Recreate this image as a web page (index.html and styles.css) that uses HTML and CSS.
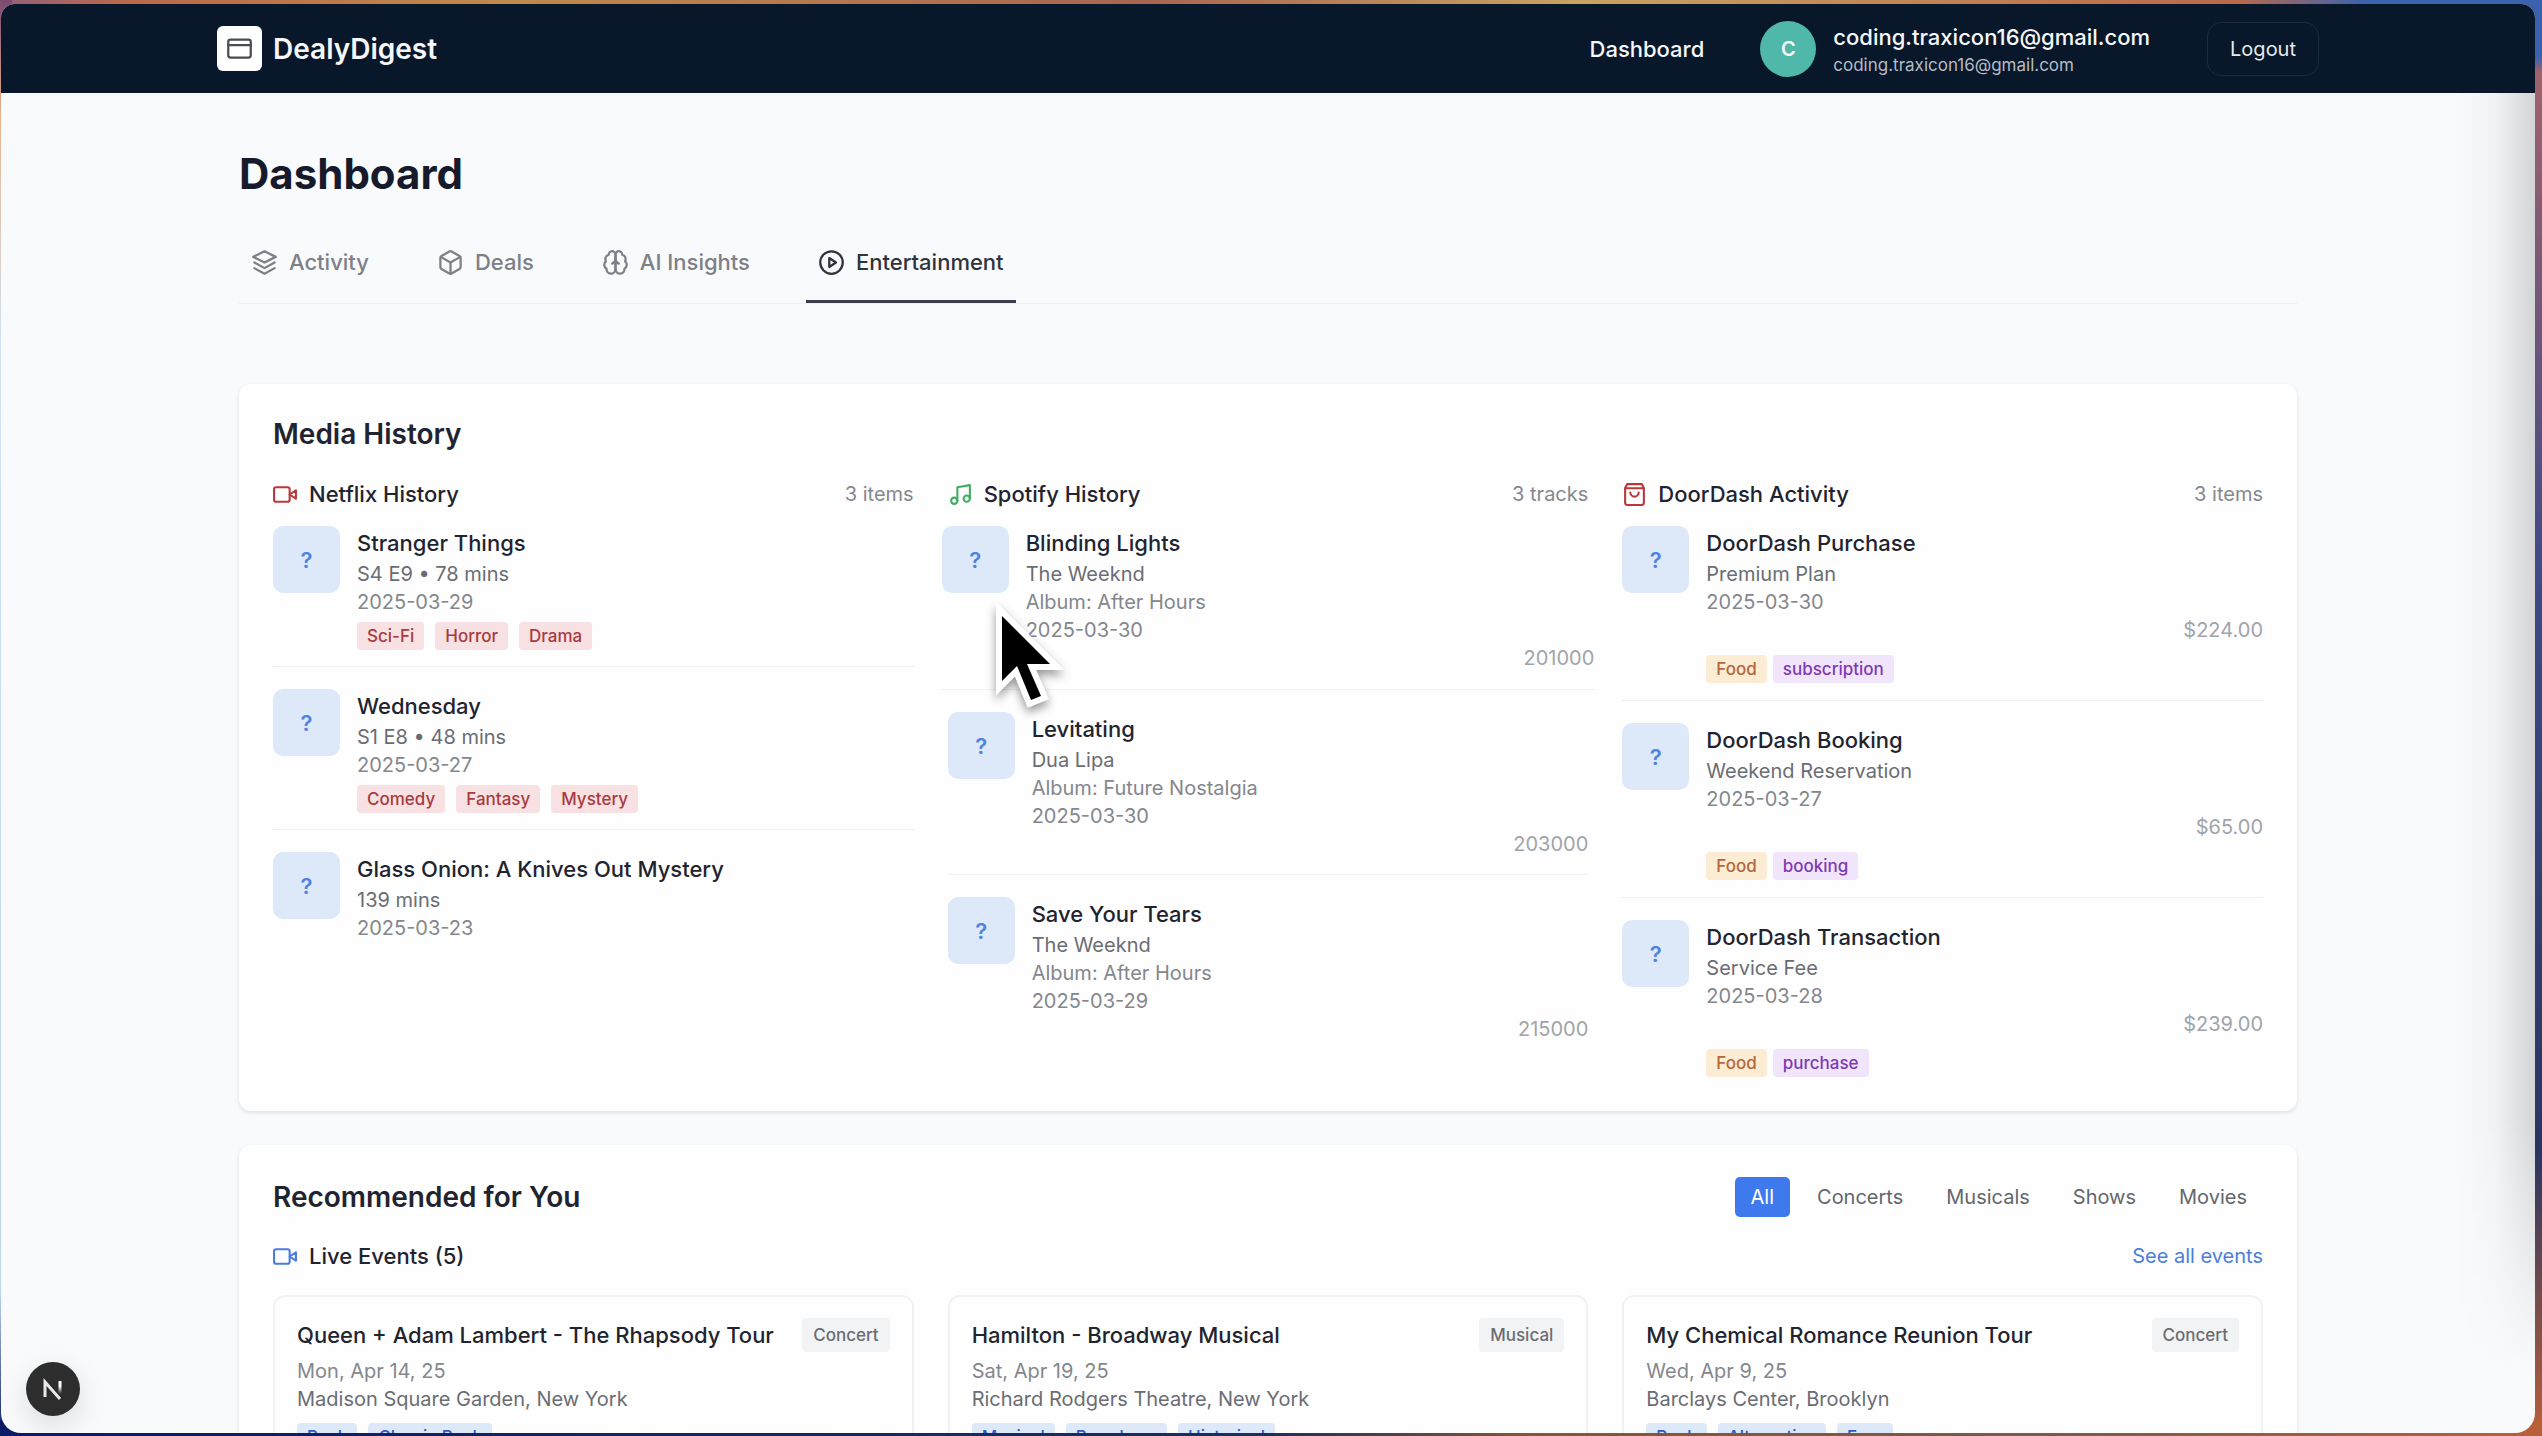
FILE: index.html
```html
<!DOCTYPE html>
<html lang="en">
<head>
  <meta charset="UTF-8">
  <meta name="viewport" content="width=device-width, initial-scale=1.0">
  <title>DealyDigest</title>
  <link rel="stylesheet" href="styles.css">
</head>
<body>
  <!-- shared icons -->
  <svg class="sprite" aria-hidden="true">
    <symbol id="icon-video" viewBox="0 0 24 24">
      <rect x="1" y="5" width="15" height="14" rx="2" />
      <path d="M22 8l-6 4 6 4V8z" />
    </symbol>
  </svg>

  <div class="window">
    <header class="topbar">
      <div class="topbar-inner">
        <a class="brand" href="#">
          <span class="brand-logo">
            <svg class="icon" viewBox="0 0 24 24"><rect x="2" y="4" width="20" height="16" rx="2" /><path d="M2 9h20" /></svg>
          </span>
          DealyDigest
        </a>
        <nav class="topbar-nav">
          <a class="nav-link" href="#">Dashboard</a>
          <div class="user">
            <span class="avatar">C</span>
            <div class="user-text">
              <div class="user-name">coding.traxicon16@gmail.com</div>
              <div class="user-email">coding.traxicon16@gmail.com</div>
            </div>
          </div>
          <button class="logout" type="button">Logout</button>
        </nav>
      </div>
    </header>

    <main class="page">
      <h1>Dashboard</h1>

      <div class="tabs" role="tablist">
        <button class="tab" type="button" role="tab">
          <svg class="icon" viewBox="0 0 24 24"><path d="M12 2L2 7l10 5 10-5-10-5z" /><path d="M3 12l9 5 9-5" /><path d="M3 17l9 5 9-5" /></svg>
          Activity
        </button>
        <button class="tab" type="button" role="tab">
          <svg class="icon" viewBox="0 0 24 24"><path d="M21 16V8a2 2 0 0 0-1-1.730l-7-4a2 2 0 0 0-2 0l-7 4A2 2 0 0 0 3 8v8a2 2 0 0 0 1 1.730l7 4a2 2 0 0 0 2 0l7-4A2 2 0 0 0 21 16z" /><path d="M3.300 7L12 12l8.700-5" /><path d="M12 22V12" /></svg>
          Deals
        </button>
        <button class="tab" type="button" role="tab">
          <svg class="icon" viewBox="0 0 24 24"><path d="M12 5a3 3 0 1 0-5.997.125 4 4 0 0 0-2.526 5.770 4 4 0 0 0 .556 6.588A4 4 0 1 0 12 18z" /><path d="M12 5a3 3 0 1 1 5.997.125 4 4 0 0 1 2.526 5.770 4 4 0 0 1-.556 6.588A4 4 0 1 1 12 18z" /><path d="M15 13a4.500 4.500 0 0 1-3-4 4.500 4.500 0 0 1-3 4" /></svg>
          AI Insights
        </button>
        <button class="tab active" type="button" role="tab" aria-selected="true">
          <svg class="icon" viewBox="0 0 24 24"><circle cx="12" cy="12" r="10" /><path d="M10 8l6 4-6 4V8z" /></svg>
          Entertainment
        </button>
      </div>

      <section class="card">
        <h2>Media History</h2>
        <div class="columns">
          <div class="column">
            <div class="column-head">
              <svg class="icon red"><use href="#icon-video" /></svg>
              <h3>Netflix History</h3>
              <span class="count">3 items</span>
            </div>
            <div class="item">
              <div class="thumb">?</div>
              <div class="info">
                <h4>Stranger Things</h4>
                <p class="sub">S4 E9 • 78 mins</p>
                <p class="date">2025-03-29</p>
                <div class="tags"><span class="tag genre">Sci-Fi</span><span class="tag genre">Horror</span><span class="tag genre">Drama</span></div>
              </div>
            </div>
            <div class="item">
              <div class="thumb">?</div>
              <div class="info">
                <h4>Wednesday</h4>
                <p class="sub">S1 E8 • 48 mins</p>
                <p class="date">2025-03-27</p>
                <div class="tags"><span class="tag genre">Comedy</span><span class="tag genre">Fantasy</span><span class="tag genre">Mystery</span></div>
              </div>
            </div>
            <div class="item">
              <div class="thumb">?</div>
              <div class="info">
                <h4>Glass Onion: A Knives Out Mystery</h4>
                <p class="sub">139 mins</p>
                <p class="date">2025-03-23</p>
              </div>
            </div>
          </div>

          <div class="column">
            <div class="column-head">
              <svg class="icon green" viewBox="0 0 24 24"><path d="M9 18V5l12-2v13" /><circle cx="6" cy="18" r="3" /><circle cx="18" cy="16" r="3" /></svg>
              <h3>Spotify History</h3>
              <span class="count">3 tracks</span>
            </div>
            <div class="item hovered">
              <div class="thumb">?</div>
              <div class="info">
                <h4>Blinding Lights</h4>
                <p class="sub">The Weeknd</p>
                <p class="date">Album: After Hours</p>
                <p class="date">2025-03-30</p>
                <p class="amount">201000</p>
              </div>
              <svg class="cursor" viewBox="0 0 72 110"><path d="M11 16V81L26 66L40 100L50 96L36 64H59Z" /></svg>
            </div>
            <div class="item">
              <div class="thumb">?</div>
              <div class="info">
                <h4>Levitating</h4>
                <p class="sub">Dua Lipa</p>
                <p class="date">Album: Future Nostalgia</p>
                <p class="date">2025-03-30</p>
                <p class="amount">203000</p>
              </div>
            </div>
            <div class="item">
              <div class="thumb">?</div>
              <div class="info">
                <h4>Save Your Tears</h4>
                <p class="sub">The Weeknd</p>
                <p class="date">Album: After Hours</p>
                <p class="date">2025-03-29</p>
                <p class="amount">215000</p>
              </div>
            </div>
          </div>

          <div class="column">
            <div class="column-head">
              <svg class="icon red" viewBox="0 0 24 24"><path d="M5 2L3 6v14a2 2 0 0 0 2 2h14a2 2 0 0 0 2-2V6l-2-4z" /><path d="M3 6h18" /><path d="M16 10a4 4 0 0 1-8 0" /></svg>
              <h3>DoorDash Activity</h3>
              <span class="count">3 items</span>
            </div>
            <div class="item">
              <div class="thumb">?</div>
              <div class="info">
                <h4>DoorDash Purchase</h4>
                <p class="sub">Premium Plan</p>
                <p class="date">2025-03-30</p>
                <p class="amount">$224.00</p>
                <div class="tags order"><span class="tag food">Food</span><span class="tag kind">subscription</span></div>
              </div>
            </div>
            <div class="item">
              <div class="thumb">?</div>
              <div class="info">
                <h4>DoorDash Booking</h4>
                <p class="sub">Weekend Reservation</p>
                <p class="date">2025-03-27</p>
                <p class="amount">$65.00</p>
                <div class="tags order"><span class="tag food">Food</span><span class="tag kind">booking</span></div>
              </div>
            </div>
            <div class="item">
              <div class="thumb">?</div>
              <div class="info">
                <h4>DoorDash Transaction</h4>
                <p class="sub">Service Fee</p>
                <p class="date">2025-03-28</p>
                <p class="amount">$239.00</p>
                <div class="tags order"><span class="tag food">Food</span><span class="tag kind">purchase</span></div>
              </div>
            </div>
          </div>
        </div>
      </section>

      <section class="card">
        <div class="card-head">
          <h2>Recommended for You</h2>
          <div class="filters">
            <button class="filter selected" type="button">All</button>
            <button class="filter" type="button">Concerts</button>
            <button class="filter" type="button">Musicals</button>
            <button class="filter" type="button">Shows</button>
            <button class="filter" type="button">Movies</button>
          </div>
        </div>
        <div class="column-head events-head">
          <svg class="icon blue"><use href="#icon-video" /></svg>
          <h3>Live Events (5)</h3>
          <a class="see-all" href="#">See all events</a>
        </div>
        <div class="columns">
          <article class="event">
            <div class="event-head"><h4>Queen + Adam Lambert - The Rhapsody Tour</h4><span class="badge">Concert</span></div>
            <p class="date">Mon, Apr 14, 25</p>
            <p class="sub">Madison Square Garden, New York</p>
            <div class="tags"><span class="tag topic">Rock</span><span class="tag topic">Classic Rock</span></div>
          </article>
          <article class="event">
            <div class="event-head"><h4>Hamilton - Broadway Musical</h4><span class="badge">Musical</span></div>
            <p class="date">Sat, Apr 19, 25</p>
            <p class="sub">Richard Rodgers Theatre, New York</p>
            <div class="tags"><span class="tag topic">Musical</span><span class="tag topic">Broadway</span><span class="tag topic">Historical</span></div>
          </article>
          <article class="event">
            <div class="event-head"><h4>My Chemical Romance Reunion Tour</h4><span class="badge">Concert</span></div>
            <p class="date">Wed, Apr 9, 25</p>
            <p class="sub">Barclays Center, Brooklyn</p>
            <div class="tags"><span class="tag topic">Rock</span><span class="tag topic">Alternative</span><span class="tag topic">Emo</span></div>
          </article>
        </div>
      </section>
    </main>

    <button class="dev-badge" type="button" aria-label="Next.js dev tools">
      <svg viewBox="0 0 40 40">
        <defs>
          <linearGradient id="fade" gradientUnits="userSpaceOnUse" x1="0" y1="12" x2="0" y2="25"><stop offset="0.400" stop-color="#fff" /><stop offset="1" stop-color="#fff" stop-opacity="0" /></linearGradient>
        </defs>
        <path d="M12 28V13L27 30" stroke="#e8e8e8" />
        <path d="M27 12v13" stroke="url(#fade)" />
      </svg>
    </button>
  </div>
</body>
</html>
```
FILE: styles.css
```css
* {
  box-sizing: border-box;
}

body {
  margin: 0;
  padding: 4px 7px 3px 1px;
  height: 100vh;
  overflow: hidden;
  font-family: Inter, "Liberation Sans", sans-serif;
  font-size: 20px;
  line-height: 28px;
  color: #1f2430;
  /* desktop wallpaper: bottom, right and left edges over the top one */
  background:
    linear-gradient(to right, #0a1a66, #1c2f5c 50%, #8a5436 60%, #7a5a48 80%, #b9603a) bottom / 100% 16px no-repeat,
    linear-gradient(#3d62ad 4%, #a0626c 5%, #3f4a86 40%, #2a3560 80%, #b9603a) right / 24px 100% no-repeat,
    linear-gradient(#7d4a70, #e8b48c 8%, #cfe4f5 25%, #b8d8f0 90%, #0a1a66) left / 12px 100% no-repeat,
    linear-gradient(to right, #95607a, #b9694a 5%, #c08a4c 20%, #a86552 45%, #c9a262 62%, #b9694a 88%, #3d62ad 93%);
}

h1, h2, h3, h4, p {
  margin: 0;
}

button {
  font-family: inherit;
  cursor: pointer;
}

.sprite {
  display: none;
}

.icon {
  width: 27px;
  height: 27px;
  flex-shrink: 0;
  fill: none;
  stroke: currentColor;
  stroke-width: 2;
  stroke-linecap: round;
  stroke-linejoin: round;
}

.window {
  position: relative;
  height: 100%;
  overflow: hidden;
  border-radius: 14px 14px 20px 20px;
  background: #f9fafc;
}

/* soft shade down the right side of the window */
.window::after {
  content: "";
  position: absolute;
  top: 88px;
  right: 0;
  width: 80px;
  height: 1280px;
  pointer-events: none;
  background: linear-gradient(to right, rgba(0, 0, 0, 0), rgba(0, 0, 0, 0.03) 50%, rgba(0, 0, 0, 0.15));
  -webkit-mask-image: linear-gradient(#000 80%, transparent);
  mask-image: linear-gradient(#000 80%, transparent);
}

/* top bar */
.topbar {
  background: #08172a;
  color: #f5f7fa;
}

.topbar-inner {
  display: flex;
  align-items: center;
  justify-content: space-between;
  max-width: 2102px;
  height: 89px;
  margin: 0 auto;
}

.brand {
  display: flex;
  align-items: center;
  gap: 11px;
  color: inherit;
  font-size: 28px;
  font-weight: 600;
  text-decoration: none;
}

.brand-logo {
  display: flex;
  align-items: center;
  justify-content: center;
  width: 45px;
  height: 45px;
  border-radius: 6px;
  background: #fff;
  color: #4a4d52;
}

.topbar-nav,
.user {
  display: flex;
  align-items: center;
}

.nav-link {
  margin-right: 56px;
  color: inherit;
  font-size: 22px;
  font-weight: 500;
  text-decoration: none;
}

.user {
  gap: 17px;
  margin-right: 57px;
}

.avatar {
  display: flex;
  align-items: center;
  justify-content: center;
  width: 56px;
  height: 56px;
  border-radius: 50%;
  background: #50b8a8;
  font-weight: 600;
}

.user-text {
  padding-top: 4px;
}

.user-name {
  font-size: 22px;
  font-weight: 500;
}

.user-email {
  font-size: 17px;
  color: #b6bcc5;
}

.logout {
  height: 54px;
  padding: 0 22px;
  border: 1px solid #1c2a3c;
  border-radius: 14px;
  background: transparent;
  color: #e6e9ed;
  font-size: 20px;
}

/* page */
.page {
  max-width: 2058px;
  margin: 0 auto;
  padding-top: 55px;
}

h1 {
  font-size: 42px;
  line-height: 52px;
  color: #171a2b;
}

.tabs {
  display: flex;
  gap: 44px;
  margin-top: 27px;
  border-bottom: 1px solid #eceef1;
}

.tab {
  display: flex;
  align-items: center;
  gap: 11px;
  height: 76px;
  padding: 0 12px 3px;
  border: 0;
  border-bottom: 3px solid transparent;
  background: none;
  color: #7d8086;
  font-size: 22px;
  font-weight: 500;
}

.tab.active {
  border-bottom-color: #3b3e48;
  color: #30333d;
}

.card {
  margin-top: 34px;
  padding: 32px 34px 33px;
  border-radius: 12px;
  background: #fefefe;
  box-shadow: 0 2px 4px rgba(0, 0, 0, 0.1);
}

.tabs + .card {
  margin-top: 80px;
}

h2 {
  font-size: 28px;
  line-height: 36px;
  font-weight: 600;
}

h3,
h4 {
  font-size: 22px;
  line-height: 34px;
  font-weight: 500;
}

.columns {
  display: grid;
  grid-template-columns: repeat(3, 1fr);
  gap: 34px;
}

.column-head {
  display: flex;
  align-items: center;
  gap: 11px;
  margin: 25px 0 15px;
}

.events-head {
  margin: 22px 0;
}

.column-head .icon {
  width: 25px;
  height: 25px;
}

.red {
  color: #b8393b;
}

.green {
  color: #3fae62;
}

.blue {
  color: #4a7be0;
}

.count,
.see-all {
  margin-left: auto;
}

.count {
  color: #85888e;
}

.see-all {
  color: #4a80d8;
  text-decoration: none;
}

.item {
  position: relative;
  display: flex;
  gap: 17px;
  padding-bottom: 16px;
  margin-bottom: 22px;
  border-bottom: 1px solid #eeeff1;
}

.item:last-child {
  margin-bottom: 0;
  padding-bottom: 0;
  border-bottom: 0;
}

.item.hovered {
  margin-left: -6px;
  margin-right: -6px;
  padding-bottom: 17px;
}

.thumb {
  display: flex;
  align-items: center;
  justify-content: center;
  width: 67px;
  height: 67px;
  flex-shrink: 0;
  border-radius: 10px;
  background: #dde9f9;
  color: #4f83e2;
  font-size: 22px;
  font-weight: 600;
}

.info {
  flex: 1;
  min-width: 0;
}

.sub {
  color: #6a6d73;
}

.date {
  color: #84878d;
}

.amount {
  color: #a1a4aa;
  text-align: right;
}

.tags {
  display: flex;
  gap: 11px;
  margin-top: 6px;
}

.tags.order {
  gap: 6px;
  margin-top: 11px;
  padding-bottom: 1px;
}

.tag {
  padding: 0 10px;
  border-radius: 4px;
  font-size: 17px;
  font-weight: 500;
}

.genre {
  background: #f8e1e2;
  color: #a83a40;
}

.food {
  background: #fcecd3;
  color: #b2683c;
}

.kind {
  background: #f1e5fc;
  color: #8038b4;
}

.topic {
  background: #dde9f9;
  color: #3058c4;
}

.cursor {
  position: absolute;
  top: 74px;
  left: 49px;
  width: 72px;
  height: 110px;
  overflow: visible;
  fill: #000;
  stroke: #fff;
  stroke-width: 12;
  paint-order: stroke;
  filter: drop-shadow(0 5px 5px rgba(0, 0, 0, 0.4));
}

/* recommendations */
.card-head {
  display: flex;
  align-items: center;
  justify-content: space-between;
}

.filters {
  display: flex;
  gap: 11px;
}

.filter {
  height: 40px;
  padding: 0 16px;
  border: 0;
  border-radius: 5px;
  background: none;
  color: #63666d;
  font-size: 20px;
}

.filter.selected {
  background: #3f79ee;
  color: #fff;
}

.event {
  padding: 21px 22px;
  border: 2px solid #f1f2f4;
  border-radius: 12px;
}

.event-head {
  display: flex;
  align-items: center;
  justify-content: space-between;
}

.event-head + .date {
  margin-top: 5px;
}

.event .tags {
  margin-top: 10px;
}

.badge {
  padding: 3px 11px;
  border-radius: 4px;
  background: #f2f3f5;
  color: #6a6d73;
  font-size: 17px;
  font-weight: 500;
}

/* dev tools button */
.dev-badge {
  position: absolute;
  left: 25px;
  bottom: 17px;
  display: flex;
  align-items: center;
  justify-content: center;
  width: 54px;
  height: 54px;
  padding: 0;
  border: 0;
  border-radius: 50%;
  background: #2d2d2d;
  box-shadow: 0 10px 30px rgba(0, 0, 0, 0.12);
}

.dev-badge svg {
  width: 40px;
  height: 40px;
  fill: none;
  stroke-width: 3;
}
```
